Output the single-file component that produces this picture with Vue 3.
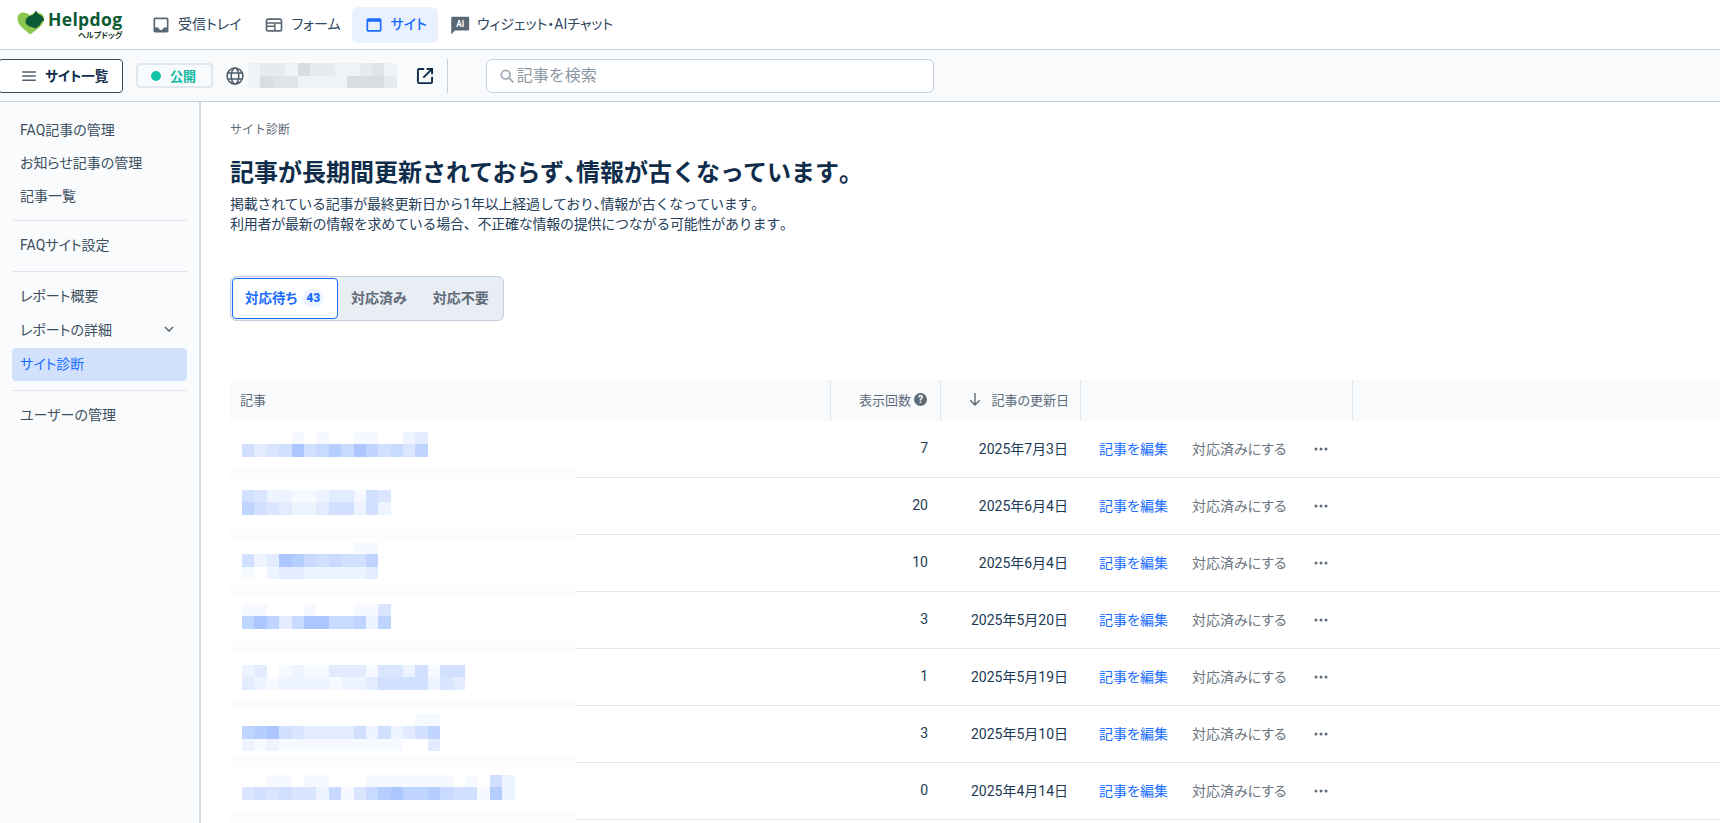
<script setup>
const navItems = [
  { key: 'inbox', label: '受信トレイ' },
  { key: 'form', label: 'フォーム' },
  { key: 'site', label: 'サイト', active: true },
  { key: 'ai', label: 'ウィジェット・AIチャット' }
]

const sideGroups = [
  [{ label: 'FAQ記事の管理' }, { label: 'お知らせ記事の管理' }, { label: '記事一覧' }],
  [{ label: 'FAQサイト設定' }],
  [{ label: 'レポート概要' }, { label: 'レポートの詳細', chevron: true }, { label: 'サイト診断', active: true }],
  [{ label: 'ユーザーの管理' }]
]

const rows = [
  { views: 7, date: '2025年7月3日', top: 11, blur: ['000010100110023', '534595686975647'] },
  { views: 20, date: '2025年6月4日', top: 12, blur: ['542211233154', '754322355252'] },
  { views: 10, date: '2025年6月4日', top: 7, blur: ['00000000011', '52398656557', '10233222223'] },
  { views: 3, date: '2025年5月20日', top: 12, blur: ['110001000114', '797369966727'] },
  { views: 1, date: '2025年5月19日', top: 16, blur: ['230121133314425155', '321222212235555243'] },
  { views: 3, date: '2025年5月10日', top: 8, blur: ['0000000000000011', '7895433335252357', '2121111111111003'] },
  { views: 0, date: '2025年4月14日', top: 12, blur: ['0011011000111111101052', '4545442614689778655182'] }
]

const siteBlur = ['122142211231', '143311114442']

function cols(lines) {
  return { gridTemplateColumns: `repeat(${lines[0].length}, 12.4px)` }
}
function cells(lines) {
  return lines.join('').split('').map(Number)
}
function blue(d) {
  return { background: `rgba(24, 100, 255, ${d * 0.04})` }
}
function grey(d) {
  return { background: `rgba(70, 90, 110, ${d * 0.045})` }
}
</script>

<template>
  <div class="app">
    <header class="top">
      <div class="logo">
        <svg class="logo-mark" width="28" height="25" viewBox="0 0 28 25">
          <path d="M13 24.500C7 19 .5 15 .5 8.500.5 4.500 3.500 2.500 6.500 2.500c2.500 0 4.500 1 6.500 3 2-2 4-3 7-3 4 0 7 2.500 7 6.500 0 6-7 10.500-14 15.500z" fill="#8cc751" />
          <path d="M8.500 11.500C8.500 8 12 5.500 16 5l3-4.500 2 3.500 4 2 2.500 4-3 2-2 3.500-4 3-4-1.500C11 16 8.500 14.500 8.500 11.500z" fill="#0c5a34" />
        </svg>
        <div class="logo-text">
          <span class="logo-en">Helpdog</span>
          <span class="logo-ja">ヘルプドッグ</span>
        </div>
      </div>
      <nav class="nav">
        <a v-for="n in navItems" :key="n.key" class="nav-item" :class="{ active: n.active }">
          <svg v-if="n.key === 'inbox'" width="20" height="20" viewBox="0 0 24 24" fill="currentColor">
            <path d="M19 3H5c-1.100 0-2 .9-2 2v14c0 1.100.9 2 2 2h14c1.100 0 2-.9 2-2V5c0-1.100-.9-2-2-2zm0 12h-4c0 1.660-1.350 3-3 3s-3-1.340-3-3H5V5h14v10z" />
          </svg>
          <svg v-else-if="n.key === 'form'" width="20" height="20" viewBox="0 0 24 24" fill="none" stroke="currentColor" stroke-width="2">
            <rect x="3" y="5" width="18" height="14" rx="2" />
            <path d="M3 9.500h18M3 13.500h9M13 9.500V19" stroke-width="1.800" />
          </svg>
          <svg v-else-if="n.key === 'site'" width="20" height="20" viewBox="0 0 24 24" fill="currentColor">
            <path d="M19 4H5c-1.100 0-2 .9-2 2v12c0 1.100.9 2 2 2h14c1.100 0 2-.9 2-2V6c0-1.100-.9-2-2-2zm0 14H5V8h14v10z" />
          </svg>
          <svg v-else width="20" height="20" viewBox="0 0 24 24">
            <path d="M3 2h18.500A1.500 1.500 0 0 1 23 3.500V17a1.500 1.500 0 0 1-1.500 1.500H6L1.500 23V3.500A1.500 1.500 0 0 1 3 2z" fill="currentColor" />
            <text x="12.300" y="14.500" text-anchor="middle" class="ai-glyph">AI</text>
          </svg>
          <span>{{ n.label }}</span>
        </a>
      </nav>
    </header>

    <div class="sub">
      <button class="list-btn">
        <svg width="18" height="18" viewBox="0 0 24 24" fill="none" stroke="#4f5d6b" stroke-width="2">
          <path d="M3 6.500h18M3 12h18M3 17.500h18" />
        </svg>
        <span>サイト一覧</span>
      </button>
      <div class="status"><i class="dot"></i><span>公開</span></div>
      <svg class="globe" width="20" height="20" viewBox="0 0 24 24" fill="none" stroke="#4f5d6b" stroke-width="1.800">
        <circle cx="12" cy="12" r="9.500" />
        <ellipse cx="12" cy="12" rx="4.500" ry="9.500" />
        <path d="M3 8.500h18M3 15.500h18" />
      </svg>
      <div class="mosaic site-blur" :style="cols(siteBlur)">
        <i v-for="(d, i) in cells(siteBlur)" :key="i" :style="grey(d)"></i>
      </div>
      <svg class="ext" width="20" height="20" viewBox="0 0 24 24" fill="none" stroke="#0f2d4a" stroke-width="2.300">
        <path d="M11 3.500H5a1.500 1.500 0 0 0-1.500 1.500v14A1.500 1.500 0 0 0 5 20.500h14a1.500 1.500 0 0 0 1.500-1.500v-6" />
        <path d="M10 14 20 4M14 3.500h6.500V10" />
      </svg>
      <div class="sep"></div>
      <div class="search">
        <svg width="16" height="16" viewBox="0 0 24 24" fill="none" stroke="#9aa5b1" stroke-width="2.600">
          <circle cx="10" cy="10" r="6.500" />
          <path d="m15 15 6.500 6.500" />
        </svg>
        <span>記事を検索</span>
      </div>
    </div>

    <div class="body">
      <aside class="side">
        <div v-for="(g, gi) in sideGroups" :key="gi" class="side-group">
          <a v-for="s in g" :key="s.label" class="side-item" :class="{ active: s.active, chev: s.chevron }">
            <span>{{ s.label }}</span>
            <svg v-if="s.chevron" width="14" height="14" viewBox="0 0 24 24" fill="none" stroke="#56636f" stroke-width="2.400">
              <path d="m5 8.500 7 7 7-7" />
            </svg>
          </a>
        </div>
      </aside>

      <main class="main">
        <div class="crumb">サイト診断</div>
        <h1>記事が長期間更新されておらず<span class="half">、</span>情報が古くなっています<span class="half">。</span></h1>
        <p class="desc">掲載されている記事が最終更新日から1年以上経過しており<span class="half">、</span>情報が古くなっています<span class="half">。</span><br />利用者が最新の情報を求めている場合、不正確な情報の提供につながる可能性があります<span class="half">。</span></p>

        <div class="tabs">
          <div class="tab on"><span>対応待ち</span><b class="count">43</b></div>
          <div class="tab">対応済み</div>
          <div class="tab">対応不要</div>
        </div>

        <div class="table">
          <div class="grid head">
            <div class="hc first">記事</div>
            <div class="hc right">
              <span>表示回数</span>
              <svg width="13" height="13" viewBox="0 0 24 24">
                <circle cx="12" cy="12" r="12" fill="#5f6b78" />
                <text x="12" y="19" text-anchor="middle" class="help-glyph">?</text>
              </svg>
            </div>
            <div class="hc right sort">
              <svg width="16" height="16" viewBox="0 0 24 24" fill="none" stroke="#56636f" stroke-width="2">
                <path d="M12 3v18M5 14l7 7 7-7" />
              </svg>
              <span>記事の更新日</span>
            </div>
            <div class="hc"></div>
            <div class="hc last"></div>
          </div>

          <div v-for="(r, ri) in rows" :key="ri" class="grid row">
            <div class="title-cell" :style="{ paddingTop: r.top + 'px' }">
              <div class="mosaic" :style="cols(r.blur)">
                <i v-for="(d, i) in cells(r.blur)" :key="i" :style="blue(d)"></i>
              </div>
              <div class="band"></div>
            </div>
            <div class="num">{{ r.views }}</div>
            <div class="num">{{ r.date }}</div>
            <div class="actions">
              <a class="edit">記事を編集</a>
              <a class="done">対応済みにする</a>
              <svg width="16" height="16" viewBox="0 0 16 16" fill="#5f6b78">
                <circle cx="3" cy="8" r="1.500" />
                <circle cx="8" cy="8" r="1.500" />
                <circle cx="13" cy="8" r="1.500" />
              </svg>
            </div>
            <div></div>
          </div>
        </div>
      </main>
    </div>
  </div>
</template>

<style>
html, body { margin: 0; background: #fff; }
</style>

<style scoped>
.app {
  height: 823px;
  overflow: hidden;
  display: flex;
  flex-direction: column;
  font-family: Roboto, "Noto Sans CJK JP", sans-serif;
  font-feature-settings: "palt";
  font-size: 14px;
  color: #0f2d4a;
}
.top {
  height: 49px;
  flex: none;
  display: flex;
  align-items: center;
  background: #fff;
  border-bottom: 1px solid #c3d0de;
  padding-left: 17px;
}
.logo { display: flex; align-items: center; width: 124px; gap: 3px; margin-top: 1px; }
.logo-mark { margin-top: -5px; }
.logo-text { display: flex; flex-direction: column; align-items: flex-end; color: #0c5a34; }
.logo-en { font-family: "Open Sans", sans-serif; font-weight: 700; font-size: 17.500px; line-height: 19px; letter-spacing: .35px; }
.logo-ja { font-size: 8px; font-weight: 700; line-height: 11px; margin-top: 1px; color: #17392a; }
.nav { display: flex; align-items: center; margin-left: -2px; }
.nav-item {
  display: flex;
  align-items: center;
  gap: 7px;
  height: 36px;
  padding: 0 11px 0 12px;
  border-radius: 6px;
  color: #5a6775;
  font-size: 14px;
}
.nav-item span { color: #30475e; margin-top: -3px; }
.nav-item.active { background: #e9f1ff; color: #1a6dff; font-weight: 500; }
.nav-item.active span { color: #1a6dff; }
.ai-glyph { font: 700 10px Roboto, sans-serif; fill: #fff; }
.help-glyph { font: 700 19px Roboto, sans-serif; fill: #fff; }

.sub {
  height: 51px;
  flex: none;
  display: flex;
  align-items: center;
  background: #f8fafc;
  border-bottom: 1px solid #c3d0de;
}
.list-btn {
  margin-left: -2px;
  height: 34px;
  width: 125px;
  box-sizing: border-box;
  padding: 0 10px 0 21px;
  display: flex;
  align-items: center;
  gap: 7px;
  background: #fff;
  border: 1px solid #3b4a59;
  border-radius: 4px;
  font: inherit;
  font-size: 13.500px;
  font-weight: 700;
  color: #0f2d4a;
}
.list-btn span { margin-top: -2px; }
.status {
  margin-left: 13px;
  width: 77px;
  height: 25px;
  box-sizing: border-box;
  display: flex;
  align-items: center;
  justify-content: center;
  gap: 9px;
  padding-right: 2px;
  border: 2px solid #e1e7ee;
  border-radius: 4px;
  color: #12b8a0;
  font-size: 13px;
  font-weight: 700;
}
.dot { width: 10px; height: 10px; border-radius: 50%; background: #12c2a9; }
.globe { margin-left: 12px; }
.mosaic { display: grid; grid-auto-rows: 12.400px; }
.mosaic i { display: block; }
.site-blur { margin-left: 3px; }
.ext { margin-left: 18px; }
.sep { width: 1px; height: 34px; background: #c3d0de; margin-left: 12px; }
.search {
  margin-left: 38px;
  width: 448px;
  height: 34px;
  box-sizing: border-box;
  display: flex;
  align-items: center;
  gap: 2px;
  padding-left: 12px;
  background: #fff;
  border: 1px solid #c3d0de;
  border-radius: 6px;
  color: #8d98a5;
  font-size: 16px;
  font-feature-settings: normal;
}
.search span { margin-top: -4px; }

.body { flex: 1; display: flex; min-height: 0; }
.side {
  width: 201px;
  flex: none;
  box-sizing: border-box;
  background: #f9fbfd;
  border-right: 2px solid #d3dbe4;
  padding: 10px 12px 0;
}
.side-group { padding-bottom: 9px; border-bottom: 1px solid #e1e6ec; margin-bottom: 8px; }
.side-group:last-child { border-bottom: 0; }
.side-item {
  height: 33px;
  box-sizing: border-box;
  display: flex;
  align-items: center;
  justify-content: space-between;
  padding: 0 11px 0 8px;
  border-radius: 4px;
  color: #3d4f60;
}
.side-group + .side-group .side-item { padding-bottom: 3px; }
.side-item.chev { margin-top: 1px; margin-bottom: 1px; }
.side-item.active { background: #d2e2fc; color: #1a6dff; }

.main { flex: 1; min-width: 0; padding: 20px 0 0 29px; }
.crumb { font-size: 12px; line-height: 17px; color: #5f6b78; font-feature-settings: normal; }
.half { font-feature-settings: "halt"; }
h1 { margin: 16px 0 0; font-size: 24px; line-height: 36px; font-weight: 700; color: #0f2d4a; font-feature-settings: normal; }
.desc { margin: 3px 0 0; font-size: 14px; line-height: 20px; color: #26405a; font-feature-settings: normal; letter-spacing: -.25px; }
.tabs {
  margin-top: 42px;
  width: 274px;
  height: 45px;
  box-sizing: border-box;
  display: flex;
  align-items: center;
  padding: 0 1px;
  background: #e9edf4;
  border: 1px solid #c3d0de;
  border-radius: 6px;
  font-weight: 700;
  font-size: 14px;
  color: #5f6b78;
  white-space: nowrap;
}
.tab { padding: 0 13px 4px; height: 41px; display: flex; align-items: center; box-sizing: border-box; }
.tab.on {
  width: 106px;
  flex: none;
  gap: 5px;
  padding-left: 12px;
  padding-right: 4px;
  background: #fff;
  border: 1px solid #1a6dff;
  border-radius: 4px;
  color: #1a6dff;
}
.tab.on span { font-size: 13.500px; }
.count { font-size: 12px; padding: 0 4px; border-radius: 10px; line-height: 18px; background: #eef4ff; margin-top: 3px; }

.table { margin-top: 59px; }
.grid { display: grid; grid-template-columns: 601px 110px 140px 272px 1fr; }
.head { height: 41px; background: #f8fafc; color: #5f6b78; font-size: 13px; border-top-left-radius: 4px; }
.hc {
  display: flex;
  align-items: center;
  border-right: 1px solid #dfe5ee;
  padding: 0 13px 3px 12px;
  gap: 3px;
}
.hc.first { padding-left: 10px; }
.hc.last { border-right: 0; }
.right { justify-content: flex-end; }
.sort { gap: 8px; padding-right: 11px; }
.row { height: 57px; box-sizing: border-box; border-bottom: 1px solid #e1e5ee; align-items: center; position: relative; }
.title-cell { align-self: stretch; padding-left: 12px; position: relative; }
.band {
  position: absolute;
  left: 0;
  top: 49px;
  width: 346px;
  height: 12px;
  background: #fcfcfc;
  z-index: 1;
}
.head + .row .band { top: 48px; }
.num { text-align: right; padding: 0 13px 2px 0; color: #1c3a55; }
.actions { display: flex; align-items: center; padding-left: 18px; }
.edit { color: #1a6dff; width: 93px; padding-bottom: 2px; }
.done { color: #6b7682; width: 121px; padding-bottom: 2px; }
</style>
